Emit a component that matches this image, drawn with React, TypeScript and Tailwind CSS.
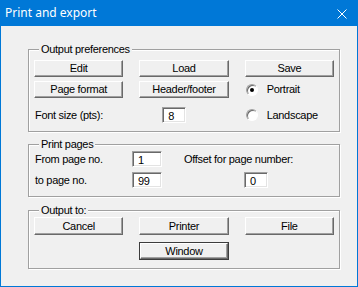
import React from 'react'

const btn =
  'flex items-center justify-center border border-t-white border-l-white border-r-[#696969] border-b-[#696969] bg-[#f0f0f0] shadow-[inset_-1px_-1px_0_#a0a0a0,inset_1px_1px_0_#f0f0f0] text-black'

function Button({ label, tall, focused }: { label: string; tall?: boolean; focused?: boolean }) {
  if (focused) {
    return (
      <div className={`border border-[#3c3c3c] ${tall ? 'h-[18px]' : 'h-[17px]'} flex`}>
        <div className={`${btn} flex-1`}>{label}</div>
      </div>
    )
  }
  return <div className={`${btn} ${tall ? 'h-[18px]' : 'h-[17px]'}`}>{label}</div>
}

function Field({ value, w }: { value: string; w: string }) {
  return (
    <div
      className={`${w} h-[16px] bg-white border border-t-[#a0a0a0] border-l-[#a0a0a0] border-r-white border-b-white shadow-[inset_1px_1px_0_#696969,inset_-1px_-1px_0_#e3e3e3] pl-[5px] leading-[15px] pt-px`}
    >
      {value}
    </div>
  )
}

function Radio({ label, checked }: { label: string; checked?: boolean }) {
  return (
    <div className="flex items-center pl-px gap-[9px]">
      <div className="w-[12px] h-[12px] rounded-full bg-white border border-t-[#a0a0a0] border-l-[#a0a0a0] border-r-white border-b-white shadow-[inset_1px_1px_0_#696969] flex items-center justify-center">
        {checked && <div className="w-[4px] h-[4px] rounded-full bg-black" />}
      </div>
      <span>{label}</span>
    </div>
  )
}

function Group({ title, className, children }: { title: string; className: string; children: React.ReactNode }) {
  return (
    <div
      className={`relative w-[312px] border border-[#a0a0a0] shadow-[inset_1px_1px_0_#fff,1px_1px_0_#fff] ${className}`}
    >
      <span className="absolute left-[10px] top-[-8px] px-[2px] bg-[#f0f0f0] leading-[14px]">{title}</span>
      {children}
    </div>
  )
}

export default function App() {
  return (
    <div className="w-[358px] h-[287px] flex flex-col bg-[#0078d7] px-px pb-px">
      <div className="h-[26px] flex items-center justify-between pl-[4px] pr-[10px]">
        <span className="text-white text-[12px] font-['Segoe_UI','Noto_Sans',sans-serif]">Print and export</span>
        <svg width="10" height="10" viewBox="0 0 10 10" className="mt-px">
          <path d="M0.5 0.5L9.5 9.5M9.5 0.5L0.5 9.5" stroke="#fff" strokeWidth="1" />
        </svg>
      </div>
      <div className="flex-1 bg-[#f0f0f0] pl-[27px] pt-[23px] text-[11px] tracking-[-0.3px] text-black font-['Liberation_Sans',Arial,sans-serif]">
        <Group title="Output preferences" className="pt-[10px] px-[5px] pb-[8px]">
          <div className="grid grid-cols-3 gap-x-[16px] gap-y-[4px]">
            <Button label="Edit" />
            <Button label="Load" />
            <Button label="Save" />
            <Button label="Page format" />
            <Button label="Header/footer" />
            <Radio label="Portrait" checked />
          </div>
          <div className="grid grid-cols-3 gap-x-[16px] mt-[9px] h-[16px] items-center">
            <span className="pl-px">Font size (pts):</span>
            <div className="pl-[23px]">
              <Field value="8" w="w-[24px]" />
            </div>
            <Radio label="Landscape" />
          </div>
        </Group>

        <Group title="Print pages" className="mt-[12px] pt-[6px] pl-[6px] pb-[8px]">
          <div className="flex flex-col gap-[5px]">
            <div className="flex items-center h-[16px]">
              <span className="w-[97px]">From page no.</span>
              <Field value="1" w="w-[30px]" />
              <span className="ml-[22px]">Offset for page number:</span>
            </div>
            <div className="flex items-center h-[16px]">
              <span className="w-[97px]">to page no.</span>
              <Field value="99" w="w-[30px]" />
              <div className="ml-[82px]">
                <Field value="0" w="w-[24px]" />
              </div>
            </div>
          </div>
        </Group>

        <Group title="Output to:" className="mt-[13px] pt-[6px] px-[5px] pb-[8px]">
          <div className="grid grid-cols-3 gap-x-[16px] gap-y-[7px]">
            <Button label="Cancel" tall />
            <Button label="Printer" tall />
            <Button label="File" tall />
            <div />
            <Button label="Window" tall focused />
          </div>
        </Group>
      </div>
    </div>
  )
}
